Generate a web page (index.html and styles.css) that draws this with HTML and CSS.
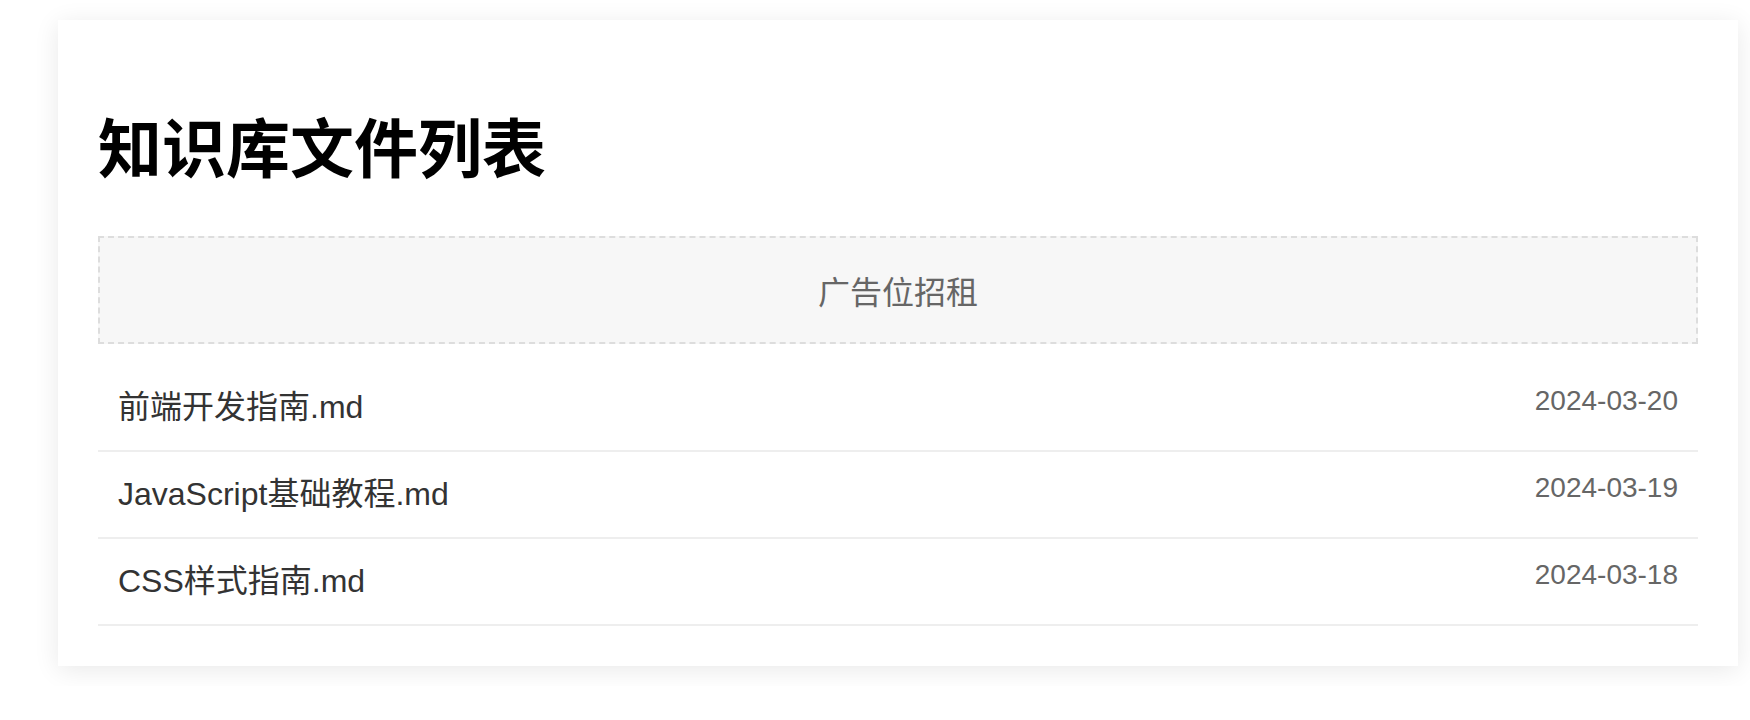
FILE: index.html
```html
<!DOCTYPE html>
<html lang="zh-CN">
<head>
    <meta charset="UTF-8">
    <meta name="viewport" content="width=device-width, initial-scale=1.0">
    <title>知识库文件列表</title>
    <link rel="stylesheet" href="styles.css">
</head>
<body>
    <div class="container">
        <h1 class="page-title">知识库文件列表</h1>
        <div class="ad-banner">广告位招租</div>
        <ul class="file-list">
            <li class="file-item">
                <a class="file-name" href="#">前端开发指南.md</a>
                <span class="file-date">2024-03-20</span>
            </li>
            <li class="file-item">
                <a class="file-name" href="#">JavaScript基础教程.md</a>
                <span class="file-date">2024-03-19</span>
            </li>
            <li class="file-item">
                <a class="file-name" href="#">CSS样式指南.md</a>
                <span class="file-date">2024-03-18</span>
            </li>
        </ul>
    </div>
</body>
</html>
```

FILE: styles.css
```css
body {
    margin: 0;
    padding: 20px 12px 20px 58px;
    background-color: #fff;
    color: #333;
    font-family: "Liberation Sans", "Noto Sans CJK SC", sans-serif;
}
.container {
    background-color: #fff;
    padding: 40px;
    box-shadow: 0 4px 24px rgba(0, 0, 0, 0.09);
}
.page-title {
    margin: 40px 0 46px;
    font-family: "Noto Sans CJK SC", sans-serif;
    font-size: 64px;
    font-weight: bold;
    line-height: 1.4;
    color: #000;
}
.ad-banner {
    margin-bottom: 21px;
    padding: 30px;
    background-color: #f7f7f7;
    border: 2px dashed #ddd;
    text-align: center;
    font-family: "Noto Sans CJK SC", sans-serif;
    font-size: 32px;
    line-height: 44px;
    color: #666;
}
.file-list {
    list-style: none;
    margin: 0;
    padding: 0;
}
.file-item {
    display: flex;
    justify-content: space-between;
    align-items: flex-start;
    padding: 20px;
    border-bottom: 2px solid #eee;
}
.file-name {
    font-size: 32px;
    line-height: 45px;
    color: #333;
    text-decoration: none;
}
.file-date {
    font-size: 28px;
    line-height: 32px;
    color: #666;
}
```
